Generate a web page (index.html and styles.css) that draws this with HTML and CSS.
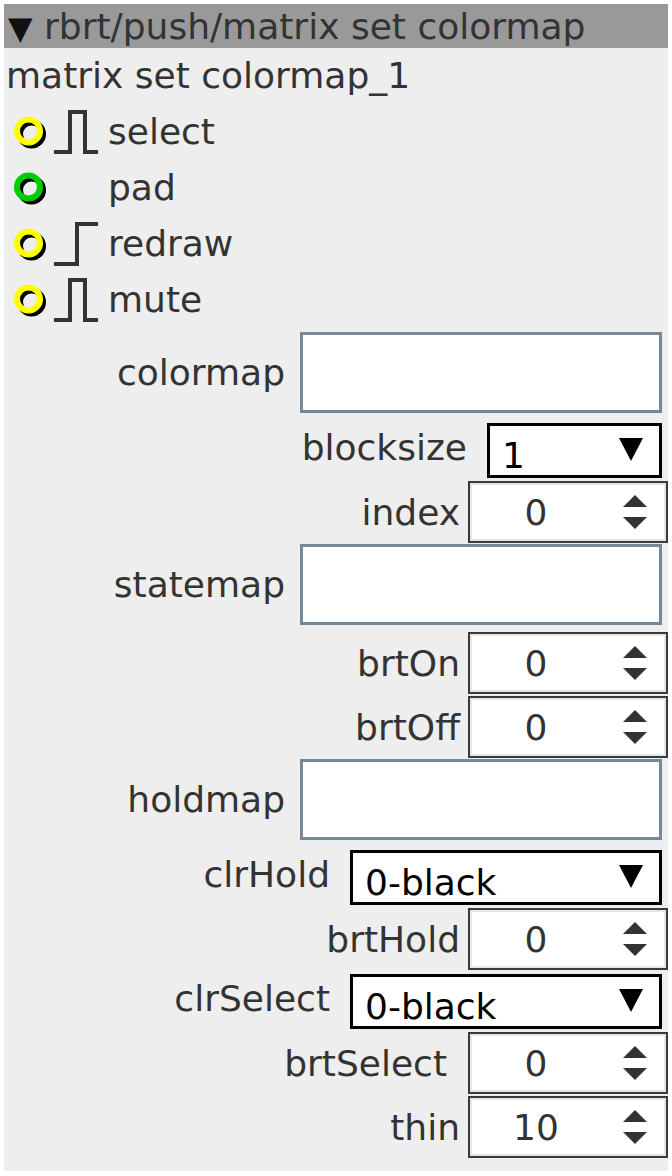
FILE: index.html
```html
<!DOCTYPE html>
<html lang="en">
<head>
    <meta charset="UTF-8">
    <meta name="viewport" content="width=device-width, initial-scale=1.0">
    <title>rbrt/push/matrix set colormap</title>
    <link rel="stylesheet" href="styles.css">
</head>
<body>
    <div class="patch">
        <div class="titlebar"><span class="caret">▼</span> rbrt/push/matrix set colormap</div>
        <div class="name">matrix set colormap_1</div>

        <ul class="inlets">
            <li class="inlet">
                <svg class="port" viewBox="0 0 36 36"><circle cx="18.5" cy="21" r="11.5" class="ring-shadow"/><circle cx="15.5" cy="18" r="11.5" class="ring-yellow"/></svg>
                <svg class="sig" viewBox="0 0 44 48"><path d="M0 45 H16 V5 H31 V45 H44"/></svg>
                <span>select</span>
            </li>
            <li class="inlet">
                <svg class="port" viewBox="0 0 36 36"><circle cx="18.5" cy="21" r="11.5" class="ring-shadow"/><circle cx="15.5" cy="18" r="11.5" class="ring-green"/></svg>
                <svg class="sig" viewBox="0 0 44 48"></svg>
                <span>pad</span>
            </li>
            <li class="inlet">
                <svg class="port" viewBox="0 0 36 36"><circle cx="18.5" cy="21" r="11.5" class="ring-shadow"/><circle cx="15.5" cy="18" r="11.5" class="ring-yellow"/></svg>
                <svg class="sig" viewBox="0 0 44 48"><path d="M0 45 H23 V5 H44"/></svg>
                <span>redraw</span>
            </li>
            <li class="inlet">
                <svg class="port" viewBox="0 0 36 36"><circle cx="18.5" cy="21" r="11.5" class="ring-shadow"/><circle cx="15.5" cy="18" r="11.5" class="ring-yellow"/></svg>
                <svg class="sig" viewBox="0 0 44 48"><path d="M0 45 H16 V5 H31 V45 H44"/></svg>
                <span>mute</span>
            </li>
        </ul>

        <div class="fields">
            <div class="row row-text">
                <label>colormap</label>
                <div class="textbox"></div>
            </div>
            <div class="row row-select">
                <label>blocksize</label>
                <div class="select"><span>1</span><svg class="drop" viewBox="0 0 24 23"><polygon points="0,0 24,0 12,23"/></svg></div>
            </div>
            <div class="row row-spin">
                <label>index</label>
                <div class="spin"><span class="num">0</span><svg class="arrows" viewBox="0 0 26 36"><polygon points="1,13 13,1 25,13"/><polygon points="1,23 25,23 13,35"/></svg></div>
            </div>
            <div class="row row-text">
                <label>statemap</label>
                <div class="textbox"></div>
            </div>
            <div class="row row-spin">
                <label>brtOn</label>
                <div class="spin"><span class="num">0</span><svg class="arrows" viewBox="0 0 26 36"><polygon points="1,13 13,1 25,13"/><polygon points="1,23 25,23 13,35"/></svg></div>
            </div>
            <div class="row row-spin">
                <label>brtOff</label>
                <div class="spin"><span class="num">0</span><svg class="arrows" viewBox="0 0 26 36"><polygon points="1,13 13,1 25,13"/><polygon points="1,23 25,23 13,35"/></svg></div>
            </div>
            <div class="row row-text">
                <label>holdmap</label>
                <div class="textbox"></div>
            </div>
            <div class="row row-select">
                <label>clrHold</label>
                <div class="select select-wide"><span>0-black</span><svg class="drop" viewBox="0 0 24 23"><polygon points="0,0 24,0 12,23"/></svg></div>
            </div>
            <div class="row row-spin">
                <label>brtHold</label>
                <div class="spin"><span class="num">0</span><svg class="arrows" viewBox="0 0 26 36"><polygon points="1,13 13,1 25,13"/><polygon points="1,23 25,23 13,35"/></svg></div>
            </div>
            <div class="row row-select">
                <label>clrSelect</label>
                <div class="select select-wide"><span>0-black</span><svg class="drop" viewBox="0 0 24 23"><polygon points="0,0 24,0 12,23"/></svg></div>
            </div>
            <div class="row row-spin">
                <label class="label-pad">brtSelect</label>
                <div class="spin"><span class="num">0</span><svg class="arrows" viewBox="0 0 26 36"><polygon points="1,13 13,1 25,13"/><polygon points="1,23 25,23 13,35"/></svg></div>
            </div>
            <div class="row row-spin">
                <label>thin</label>
                <div class="spin"><span class="num">10</span><svg class="arrows" viewBox="0 0 26 36"><polygon points="1,13 13,1 25,13"/><polygon points="1,23 25,23 13,35"/></svg></div>
            </div>
        </div>
    </div>
</body>
</html>
```

FILE: styles.css
```css
body {
    margin: 0;
    padding: 4px 4px 0;
    background: #fff;
    font-family: "DejaVu Sans", sans-serif;
    font-size: 36px;
    color: #333;
}
.patch {
    background: #eee;
    padding-bottom: 13px;
}
.titlebar {
    background: #999;
    height: 44px;
    box-sizing: border-box;
    padding: 2px 0 0 4px;
    line-height: 41px;
    white-space: nowrap;
}
.caret {
    font-size: 32px;
    color: #111;
}
.name {
    margin-top: 7px;
    padding-left: 2px;
    line-height: 41px;
}

/* inlets */
.inlets {
    list-style: none;
    margin: 7px 0 0;
    padding: 0 0 0 9px;
}
.inlet {
    display: flex;
    align-items: center;
    height: 56px;
    line-height: 41px;
}
.port {
    width: 36px;
    height: 36px;
}
.port circle {
    fill: none;
    stroke-width: 6;
}
.ring-shadow { stroke: #000; }
.ring-yellow { stroke: #ffff00; }
.ring-green { stroke: #00cc00; }
.sig {
    width: 44px;
    height: 48px;
    margin: 0 10px 0 5px;
}
.sig path {
    fill: none;
    stroke: #333;
    stroke-width: 4;
}

/* parameter rows */
.fields {
    padding-top: 4px;
}
.row {
    display: flex;
    justify-content: flex-end;
    align-items: center;
    line-height: 41px;
}
.row-text {
    margin: 1px 6px 0 0;
    gap: 15px;
}
.row-select {
    margin: 4px 6px 0 0;
    gap: 20px;
}
.row-select label {
    margin-bottom: 6px;
}
.row-text + .row-select {
    margin-top: 10px;
}
.row-spin {
    margin-top: 2px;
    gap: 8px;
}
.row-select + .row-spin {
    margin-top: 3px;
}
.row-text + .row-spin {
    margin-top: 7px;
}
.label-pad {
    margin-right: 13px;
}
.textbox {
    width: 362px;
    height: 81px;
    box-sizing: border-box;
    background: #fff;
    border: 3px solid #778899;
}
.select {
    width: 175px;
    height: 55px;
    box-sizing: border-box;
    display: flex;
    justify-content: space-between;
    align-items: flex-end;
    padding: 0 16px 2px 12px;
    background: #fff;
    border: 3px solid #000;
    color: #000;
    line-height: 35px;
}
.select-wide {
    width: 312px;
}
.drop {
    width: 24px;
    height: 23px;
    align-self: center;
}
.spin {
    width: 200px;
    height: 62px;
    box-sizing: border-box;
    display: flex;
    align-items: center;
    background: #fff;
    border: 2px solid #3a3a3a;
    box-shadow: inset 0 0 0 2px #e6e6e6;
}
.num {
    width: 132px;
    text-align: center;
}
.arrows {
    width: 26px;
    height: 36px;
    margin-left: 20px;
    fill: #333;
}
```
